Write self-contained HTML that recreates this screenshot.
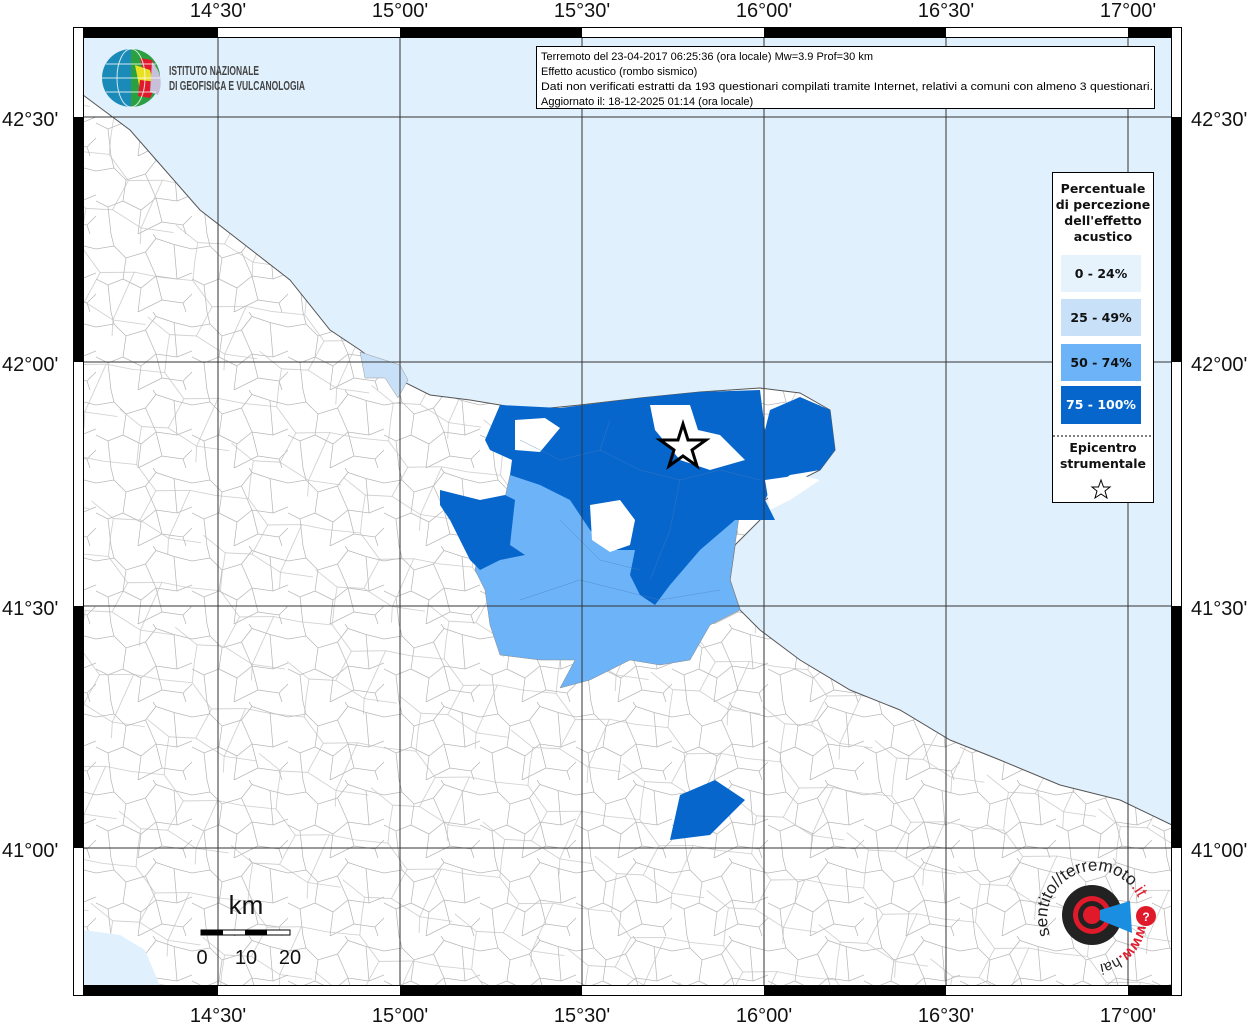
<!DOCTYPE html>
<html><head><meta charset="utf-8"><style>
body{margin:0;background:#fff;width:1255px;height:1024px;overflow:hidden;font-family:"Liberation Sans",sans-serif}
svg{display:block}
</style></head><body>
<svg width="1255" height="1024" viewBox="0 0 1255 1024" xmlns="http://www.w3.org/2000/svg">
<defs>
<pattern id="comm" width="64" height="52" patternUnits="userSpaceOnUse" patternTransform="scale(1.5)">
<path d="M0,10 L12,8 20,16 33,12 40,3 52,7 64,10 M20,16 L18,30 8,34 0,30 M18,30 L30,36 40,28 33,12 M40,28 L54,30 64,26 M54,30 L52,7 M30,36 L28,52 M40,28 L44,44 58,46 64,40 M44,44 L28,52 M8,34 L10,52 M12,8 L10,0 M40,3 L38,0 M58,46 L60,52" fill="none" stroke="#b8b8b8" stroke-width=".5"/>
</pattern>
<pattern id="comm2" width="90" height="74" patternUnits="userSpaceOnUse" patternTransform="rotate(17) scale(1.3)">
<path d="M0,20 L25,15 45,30 70,22 90,20 M45,30 L40,55 20,60 0,52 M40,55 L65,62 90,58 M70,22 L65,62 M25,15 L22,0 M20,60 L22,74 M65,62 L68,74" fill="none" stroke="#c0c0c0" stroke-width=".5"/>
</pattern>
</defs>
<rect x="83" y="37" width="1089" height="949" fill="#fff"/>
<rect x="83" y="37" width="1089" height="949" fill="url(#comm)"/>
<rect x="83" y="37" width="1089" height="949" fill="url(#comm2)"/>
<path d="M83,37 H1172 V825 L1120,800 1060,785 1000,760 950,740 900,710 850,690 800,660 760,630 740,610 730,580 735,545 760,520 765,500 780,490 820,470 835,450 830,410 800,393 760,388 700,392 640,398 580,405 530,410 500,405 470,400 430,395 400,380 380,365 360,350 330,330 290,280 200,210 130,130 83,95 Z" fill="#e0f0fd"/>
<path d="M83,930 L120,935 145,950 160,986 H83 Z" fill="#e0f0fd"/>
<path d="M1172,825 L1120,800 1060,785 1000,760 950,740 900,710 850,690 800,660 760,630 740,610 730,580 735,545 760,520 765,500 780,490 820,470 835,450 830,410 800,393 760,388 700,392 640,398 580,405 530,410 500,405 470,400 430,395 400,380 380,365 360,350 330,330 290,280 200,210 130,130 83,95" fill="none" stroke="#555" stroke-width="1"/>
<path d="M360,352 L400,365 408,380 398,398 385,378 365,378 Z" fill="#c8e1f8" stroke="#999" stroke-width=".5"/>
<path d="M510,475 L560,470 600,480 650,470 700,475 740,480 740,510 735,545 730,580 740,610 710,625 690,660 660,665 630,660 590,680 560,688 575,660 540,660 500,655 490,625 485,590 475,570 480,545 500,520 Z" fill="#6db3f8" stroke="#888" stroke-width=".5"/>
<path d="M630,428 L690,440 705,470 660,465 640,450 Z" fill="#6db3f8"/>
<path d="M500,405 L560,408 640,398 700,392 760,390 765,430 770,410 800,397 830,410 835,450 820,470 790,475 770,490 765,500 775,520 735,520 700,550 670,585 655,605 640,595 630,575 635,550 610,550 590,530 570,500 540,485 510,475 512,460 490,450 485,440 Z" fill="#0666cc"/>
<path d="M440,490 L480,500 505,495 515,500 510,545 525,555 500,560 480,570 470,560 450,520 440,505 Z" fill="#0666cc"/>
<path d="M680,795 L715,780 745,800 725,820 710,835 670,840 Z" fill="#0666cc"/>
<path d="M650,405 L690,405 698,430 720,435 745,460 710,470 680,460 655,430 Z" fill="#fff"/>
<path d="M590,505 L620,500 635,520 630,545 610,552 592,540 Z" fill="#fff"/>
<path d="M515,420 L545,418 560,428 540,452 515,450 Z" fill="#fff"/>
<path d="M765,480 L800,475 820,480 790,500 770,510 Z" fill="#fff"/>
<g fill="none" stroke="#4a7fc0" stroke-width=".5" opacity=".7">
<path d="M520,440 L560,460 600,450 640,470 680,480 720,470 760,480 M600,450 L610,420 M680,480 L670,530 650,580 M560,520 L600,560 640,570 M520,600 L580,580 660,600 720,590"/>
</g>
<g stroke="#333" stroke-width="1">
<path d="M218,37V986M400,37V986M582,37V986M764,37V986M946,37V986M1128,37V986M83,117H1172M83,362H1172M83,606H1172M83,848H1172"/>
</g>
<polygon points="683,424 688,440 706,440 692,450 697,466 683,456 669,466 674,450 660,440 678,440" fill="none" stroke="#000" stroke-width="3"/>
<rect x="73.5" y="27.5" width="1108" height="968" fill="none" stroke="#000"/>
<rect x="83.5" y="37.5" width="1088" height="948" fill="none" stroke="#000"/>
<g fill="#000">
<rect x="83" y="27" width="135" height="10"/><rect x="400" y="27" width="182" height="10"/><rect x="764" y="27" width="182" height="10"/><rect x="1128" y="27" width="44" height="10"/>
<rect x="83" y="986" width="135" height="10"/><rect x="400" y="986" width="182" height="10"/><rect x="764" y="986" width="182" height="10"/><rect x="1128" y="986" width="44" height="10"/>
<rect x="73" y="117" width="10" height="245"/><rect x="73" y="606" width="10" height="242"/>
<rect x="1172" y="117" width="10" height="245"/><rect x="1172" y="606" width="10" height="242"/>
</g>
<g font-size="20" fill="#111" text-anchor="middle">
<text x="218" y="17">14°30'</text><text x="400" y="17">15°00'</text><text x="582" y="17">15°30'</text><text x="764" y="17">16°00'</text><text x="946" y="17">16°30'</text><text x="1128" y="17">17°00'</text>
<text x="218" y="1022">14°30'</text><text x="400" y="1022">15°00'</text><text x="582" y="1022">15°30'</text><text x="764" y="1022">16°00'</text><text x="946" y="1022">16°30'</text><text x="1128" y="1022">17°00'</text>
</g>
<g font-size="20" fill="#111">
<text x="2" y="126">42°30'</text><text x="2" y="371">42°00'</text><text x="2" y="615">41°30'</text><text x="2" y="857">41°00'</text>
<text x="1191" y="126">42°30'</text><text x="1191" y="371">42°00'</text><text x="1191" y="615">41°30'</text><text x="1191" y="857">41°00'</text>
</g>
<rect x="536.5" y="46.5" width="618" height="62" fill="#fff" stroke="#000"/>
<g font-size="11" fill="#000">
<text x="541" y="60">Terremoto del 23-04-2017 06:25:36 (ora locale) Mw=3.9 Prof=30 km</text>
<text x="541" y="75">Effetto acustico (rombo sismico)</text>
<text x="541" y="90" textLength="612" lengthAdjust="spacingAndGlyphs">Dati non verificati estratti da 193 questionari compilati tramite Internet, relativi a comuni con almeno 3 questionari.</text>
<text x="541" y="105">Aggiornato il: 18-12-2025 01:14 (ora locale)</text>
</g>
<circle cx="131" cy="78" r="29" fill="#1a8bb8"/>
<path d="M131,49 A29,29 0 0 1 160,78 A29,29 0 0 1 131,107 Z" fill="#2aa040"/>
<path d="M140,58 L152,60 158,72 145,80 Z" fill="#e01a2a"/>
<path d="M135,65 L150,70 155,90 140,90 Z" fill="#e8e020"/>
<path d="M140,80 L158,82 150,98 138,96 Z" fill="#e01a2a"/>
<path d="M152,62 A29,29 0 0 1 158,95 L150,92 Z" fill="#c8c0d8"/>
<g stroke="#fff" stroke-width="1" fill="none" opacity=".8"><ellipse cx="131" cy="78" rx="14" ry="29"/><path d="M102,78H160M106,64H156M106,92H156"/></g>
<g font-size="13" fill="#444" font-weight="bold"><text x="169" y="75" textLength="90" lengthAdjust="spacingAndGlyphs">ISTITUTO NAZIONALE</text><text x="169" y="90" textLength="136" lengthAdjust="spacingAndGlyphs">DI GEOFISICA E VULCANOLOGIA</text></g>
<rect x="1052.5" y="172.5" width="101" height="330" fill="#fff" stroke="#000"/>
<g font-size="12.5" font-weight="bold" text-anchor="middle" fill="#111" font-family="DejaVu Sans, sans-serif">
<text x="1103" y="193">Percentuale</text><text x="1103" y="209">di percezione</text><text x="1103" y="225">dell'effetto</text><text x="1103" y="241">acustico</text>
</g>
<rect x="1061" y="255" width="80" height="37" fill="#e6f3fd"/>
<rect x="1061" y="299" width="80" height="37" fill="#c8e1f8"/>
<rect x="1061" y="344" width="80" height="37" fill="#6db3f8"/>
<rect x="1061" y="386" width="80" height="38" fill="#0666cc"/>
<g font-size="12.5" font-weight="bold" text-anchor="middle" fill="#111" font-family="DejaVu Sans, sans-serif">
<text x="1101" y="278">0 - 24%</text><text x="1101" y="322">25 - 49%</text><text x="1101" y="367">50 - 74%</text><text x="1101" y="409" fill="#fff">75 - 100%</text>
<text x="1103" y="452">Epicentro</text><text x="1103" y="468">strumentale</text>
</g>
<path d="M1053,436H1153" stroke="#000" stroke-dasharray="2,2"/>
<polygon points="1101,480 1103.5,487 1110,487 1105,491 1107,498 1101,494 1095,498 1097,491 1092,487 1098.5,487" fill="none" stroke="#000"/>
<text x="246" y="914" font-size="26" text-anchor="middle" fill="#111">km</text>
<rect x="201" y="930" width="89" height="5" fill="#fff" stroke="#000"/>
<rect x="201" y="930" width="22" height="5" fill="#000"/><rect x="245" y="930" width="22" height="5" fill="#000"/>
<g font-size="20" text-anchor="middle" fill="#111"><text x="202" y="964">0</text><text x="246" y="964">10</text><text x="290" y="964">20</text></g>
<circle cx="1092" cy="915" r="30" fill="#222"/>
<circle cx="1092" cy="915" r="19" fill="#e01a2a"/>
<circle cx="1092" cy="915" r="14" fill="#222"/>
<circle cx="1092" cy="915" r="9" fill="#e01a2a"/>
<path d="M1100,910 L1130,901 1132,933 1100,920 Z" fill="#1a8ee0"/>
<circle cx="1146" cy="916" r="10" fill="#e01a2a"/>
<text x="1146" y="921" font-size="12" fill="#fff" text-anchor="middle" font-weight="bold">?</text>
<path id="arc" d="M1050,935 A43,43 0 1 1 1140,902" fill="none"/>
<text font-size="17" fill="#222"><textPath href="#arc">sentito<tspan>//</tspan>terremoto<tspan fill="#e01a2a">.it</tspan></textPath></text>
<path id="arc2" d="M1138,925 A47,47 0 0 1 1075,962" fill="none"/>
<text font-size="15" fill="#e01a2a" font-weight="bold"><textPath href="#arc2">www.<tspan fill="#222" font-weight="normal">hai</tspan></textPath></text>
</svg>
</body></html>
